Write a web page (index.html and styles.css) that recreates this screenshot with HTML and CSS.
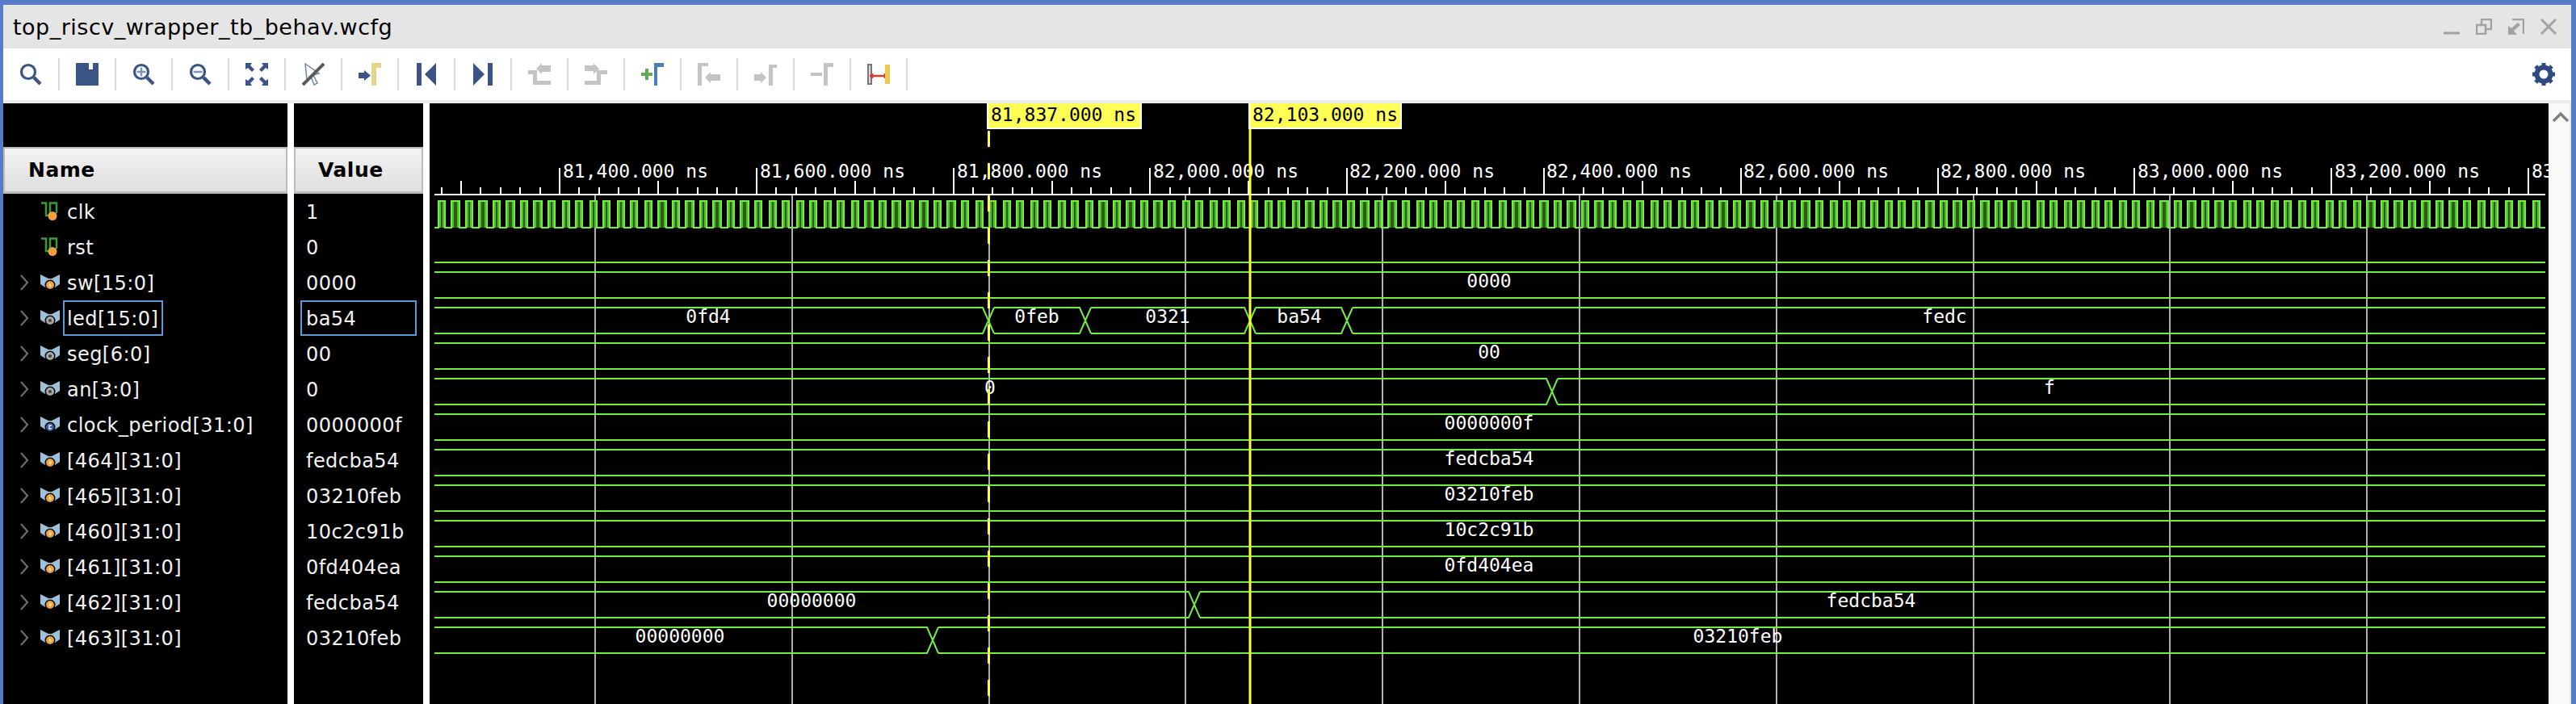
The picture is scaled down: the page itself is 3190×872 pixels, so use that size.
FILE: index.html
```html
<!doctype html>
<html>
    <head>
        <meta charset="utf-8">
        <title>top_riscv_wrapper_tb_behav.wcfg</title>
        <link rel="stylesheet" href="styles.css">
    </head>
    <body>
        <div class="window">
            <div class="titlebar">
                <span class="title">top_riscv_wrapper_tb_behav.wcfg</span>
                <div class="winbtns">
                    <svg viewBox="0 0 20 20"><path class="wb" d="M0 18H20"/></svg>
                    <svg viewBox="0 0 20 20"><path class="wb thin" d="M1 8H12V19H1ZM7 8V1H19V13H12"/></svg>
                    <svg viewBox="0 0 20 20"><path class="wb thin" d="M5 1H19V19"/><path class="wbf" d="M0 20V9L4 12L12 5L15 8L7 15L11 20Z"/></svg>
                    <svg viewBox="0 0 20 20"><path class="wb" d="M1 1L19 19M19 1L1 19"/></svg>
                </div>
            </div>

            <div class="toolbar">
                <div class="tool"><svg viewBox="0 0 28 28"><circle class="ln" cx="11" cy="11" r="8.5"/><path class="ln fat" d="M18 18L26 26"/></svg></div>
                <div class="tool"><svg viewBox="0 0 28 28"><path class="fl" d="M0 0H16V8H21V0H28V28H0Z"/></svg></div>
                <div class="tool"><svg viewBox="0 0 28 28"><circle class="ln" cx="11" cy="11" r="8.5"/><path class="ln fat" d="M18 18L26 26"/><path class="ln pale" d="M11 5.500V16.500M5.500 11H16.500"/></svg></div>
                <div class="tool"><svg viewBox="0 0 28 28"><circle class="ln" cx="11" cy="11" r="8.500"/><path class="ln fat" d="M18 18L26 26"/><path class="ln pale" d="M5.500 11H16.500"/></svg></div>
                <div class="tool"><svg viewBox="0 0 28 28"><path class="fl" d="M0 0H8L6 3L11 8L8 11L3 6L0 8ZM28 0H20L22 3L17 8L20 11L25 6L28 8ZM0 28H8L6 25L11 20L8 17L3 22L0 20ZM28 28H20L22 25L17 20L20 17L25 22L28 20Z"/></svg></div>
                <div class="tool"><svg viewBox="0 0 28 28"><path class="ln slim" d="M4 1L21 13L14 15L19 25L15 27L11 17L6 21Z"/><path class="ln gr" d="M1 27L27 1"/></svg></div>
                <div class="tool"><svg viewBox="0 0 28 28"><path class="fl" d="M0 12H7V9L15 15.500L7 22V19H0Z"/><path class="fy" d="M16 0H28V6H22V28H16Z"/></svg></div>
                <div class="tool"><svg viewBox="0 0 28 28"><path class="fl" d="M2 0H8V28H2ZM26 0V28L12 14Z"/></svg></div>
                <div class="tool"><svg viewBox="0 0 28 28"><path class="fl" d="M2 0L16 14L2 28ZM20 0H26V28H20Z"/></svg></div>
                <div class="tool"><svg viewBox="0 0 28 28"><path class="fg" d="M0 9H11V22H28V27H6V14H0ZM10 7L17 0V3H28V11H17V14Z"/></svg></div>
                <div class="tool"><svg viewBox="0 0 28 28"><path class="fg" d="M0 3H11V0L18 7L11 14V10H0ZM28 9V14H20V27H0V22H15V9Z"/></svg></div>
                <div class="tool"><svg viewBox="0 0 28 28"><path class="fgn" d="M5 7H9V12H14V16H9V21H5V16H0V12H5Z"/><path class="fb" d="M16 0H28V5H20V28H16Z"/></svg></div>
                <div class="tool"><svg viewBox="0 0 28 28"><path class="fg" d="M0 0H13V4H5V28H0ZM9 18L16 11V14H28V22H16V25Z"/></svg></div>
                <div class="tool"><svg viewBox="0 0 28 28"><path class="fg" d="M0 14H8V11L15 18L8 25V22H0ZM18 2H28V6H23V28H18Z"/></svg></div>
                <div class="tool"><svg viewBox="0 0 28 28"><path class="fg" d="M0 12H14V16H0ZM16 0H28V5H21V28H16Z"/></svg></div>
                <div class="tool"><svg viewBox="0 0 28 28"><path class="swap1" d="M1 2H5V26H1Z"/><path class="swap2" d="M3 16H25M6 13V19M22 13V19"/><path class="fy2" d="M22 2H28V26H22Z"/></svg></div>
                <div class="gear">
                    <svg viewBox="0 0 28 28"><circle class="gear-ring" cx="14" cy="14" r="8.500"/><path class="gear-teeth" d="M14 0V28M0 14H28M4 4L24 24M24 4L4 24"/></svg>
                </div>
            </div>

            <div class="main">
                <div class="names">
                    <div class="colhead namehead">Name</div>
                    <div class="row"><span class="nochev"></span><svg class="ico" viewBox="0 0 24 24"><path class="bit" d="M1 1.500H7V17H12V1.500H20V14"/><circle class="dot" cx="15" cy="17.500" r="5.500"/></svg><span class="nm">clk</span></div>
                    <div class="row"><span class="nochev"></span><svg class="ico" viewBox="0 0 24 24"><path class="bit" d="M1 1.500H7V17H12V1.500H20V14"/><circle class="dot" cx="15" cy="17.500" r="5.500"/></svg><span class="nm">rst</span></div>
                    <div class="row"><svg class="chev" viewBox="0 0 10 20"><path d="M1 1L9 10L1 19"/></svg><svg class="ico" viewBox="0 0 24 24"><path class="wing" d="M0 2L10 7H14L24 2V14L18 18H6L0 14Z"/><circle class="ring" cx="12" cy="15" r="6.500"/><circle class="dot" cx="12" cy="15" r="5"/><rect class="pip" x="10.500" y="13" width="3" height="4"/></svg><span class="nm">sw[15:0]</span></div>
                    <div class="row"><svg class="chev" viewBox="0 0 10 20"><path d="M1 1L9 10L1 19"/></svg><svg class="ico" viewBox="0 0 24 24"><path class="wing" d="M0 2L10 7H14L24 2V14L18 18H6L0 14Z"/><circle class="ring" cx="12" cy="15" r="6.500"/><circle class="dotg" cx="12" cy="15" r="5"/><circle class="hole" cx="12" cy="15" r="2"/></svg><span class="nm sel">led[15:0]</span></div>
                    <div class="row"><svg class="chev" viewBox="0 0 10 20"><path d="M1 1L9 10L1 19"/></svg><svg class="ico" viewBox="0 0 24 24"><path class="wing" d="M0 2L10 7H14L24 2V14L18 18H6L0 14Z"/><circle class="ring" cx="12" cy="15" r="6.500"/><circle class="dotg" cx="12" cy="15" r="5"/><circle class="hole" cx="12" cy="15" r="2"/></svg><span class="nm">seg[6:0]</span></div>
                    <div class="row"><svg class="chev" viewBox="0 0 10 20"><path d="M1 1L9 10L1 19"/></svg><svg class="ico" viewBox="0 0 24 24"><path class="wing" d="M0 2L10 7H14L24 2V14L18 18H6L0 14Z"/><circle class="ring" cx="12" cy="15" r="6.500"/><circle class="dotg" cx="12" cy="15" r="5"/><circle class="hole" cx="12" cy="15" r="2"/></svg><span class="nm">an[3:0]</span></div>
                    <div class="row"><svg class="chev" viewBox="0 0 10 20"><path d="M1 1L9 10L1 19"/></svg><svg class="ico" viewBox="0 0 24 24"><path class="wing" d="M0 2L10 7H14L24 2V14L18 18H6L0 14Z"/><circle class="ring" cx="12" cy="15" r="6.500"/><circle class="dotb" cx="12" cy="15" r="5"/><path class="cee" d="M14 13H11V17H14"/></svg><span class="nm">clock_period[31:0]</span></div>
                    <div class="row"><svg class="chev" viewBox="0 0 10 20"><path d="M1 1L9 10L1 19"/></svg><svg class="ico" viewBox="0 0 24 24"><path class="wing" d="M0 2L10 7H14L24 2V14L18 18H6L0 14Z"/><circle class="ring" cx="12" cy="15" r="6.500"/><circle class="dot" cx="12" cy="15" r="5"/><rect class="pip" x="10.500" y="13" width="3" height="4"/></svg><span class="nm">[464][31:0]</span></div>
                    <div class="row"><svg class="chev" viewBox="0 0 10 20"><path d="M1 1L9 10L1 19"/></svg><svg class="ico" viewBox="0 0 24 24"><path class="wing" d="M0 2L10 7H14L24 2V14L18 18H6L0 14Z"/><circle class="ring" cx="12" cy="15" r="6.500"/><circle class="dot" cx="12" cy="15" r="5"/><rect class="pip" x="10.500" y="13" width="3" height="4"/></svg><span class="nm">[465][31:0]</span></div>
                    <div class="row"><svg class="chev" viewBox="0 0 10 20"><path d="M1 1L9 10L1 19"/></svg><svg class="ico" viewBox="0 0 24 24"><path class="wing" d="M0 2L10 7H14L24 2V14L18 18H6L0 14Z"/><circle class="ring" cx="12" cy="15" r="6.500"/><circle class="dot" cx="12" cy="15" r="5"/><rect class="pip" x="10.500" y="13" width="3" height="4"/></svg><span class="nm">[460][31:0]</span></div>
                    <div class="row"><svg class="chev" viewBox="0 0 10 20"><path d="M1 1L9 10L1 19"/></svg><svg class="ico" viewBox="0 0 24 24"><path class="wing" d="M0 2L10 7H14L24 2V14L18 18H6L0 14Z"/><circle class="ring" cx="12" cy="15" r="6.500"/><circle class="dot" cx="12" cy="15" r="5"/><rect class="pip" x="10.500" y="13" width="3" height="4"/></svg><span class="nm">[461][31:0]</span></div>
                    <div class="row"><svg class="chev" viewBox="0 0 10 20"><path d="M1 1L9 10L1 19"/></svg><svg class="ico" viewBox="0 0 24 24"><path class="wing" d="M0 2L10 7H14L24 2V14L18 18H6L0 14Z"/><circle class="ring" cx="12" cy="15" r="6.500"/><circle class="dot" cx="12" cy="15" r="5"/><rect class="pip" x="10.500" y="13" width="3" height="4"/></svg><span class="nm">[462][31:0]</span></div>
                    <div class="row"><svg class="chev" viewBox="0 0 10 20"><path d="M1 1L9 10L1 19"/></svg><svg class="ico" viewBox="0 0 24 24"><path class="wing" d="M0 2L10 7H14L24 2V14L18 18H6L0 14Z"/><circle class="ring" cx="12" cy="15" r="6.500"/><circle class="dot" cx="12" cy="15" r="5"/><rect class="pip" x="10.500" y="13" width="3" height="4"/></svg><span class="nm">[463][31:0]</span></div>
                </div>

                <div class="values">
                    <div class="colhead valhead">Value</div>
                    <div class="row"><span class="val">1</span></div>
                    <div class="row"><span class="val">0</span></div>
                    <div class="row"><span class="val">0000</span></div>
                    <div class="row"><span class="val sel">ba54</span></div>
                    <div class="row"><span class="val">00</span></div>
                    <div class="row"><span class="val">0</span></div>
                    <div class="row"><span class="val">0000000f</span></div>
                    <div class="row"><span class="val">fedcba54</span></div>
                    <div class="row"><span class="val">03210feb</span></div>
                    <div class="row"><span class="val">10c2c91b</span></div>
                    <div class="row"><span class="val">0fd404ea</span></div>
                    <div class="row"><span class="val">fedcba54</span></div>
                    <div class="row"><span class="val">03210feb</span></div>
                </div>

                <svg class="wave" viewBox="532 128 2624 744">
                    <g id="grid"></g>
                    <g id="ruler"></g>
                    <g id="clk"></g>
                    <g id="buses"></g>

                    <text class="tick" x="697" y="220">81,400.000 ns</text>
                    <text class="tick" x="941" y="220">81,600.000 ns</text>
                    <text class="tick" x="1185" y="220">81,800.000 ns</text>
                    <text class="tick" x="1428" y="220">82,000.000 ns</text>
                    <text class="tick" x="1671" y="220">82,200.000 ns</text>
                    <text class="tick" x="1915" y="220">82,400.000 ns</text>
                    <text class="tick" x="2159" y="220">82,600.000 ns</text>
                    <text class="tick" x="2403" y="220">82,800.000 ns</text>
                    <text class="tick" x="2647" y="220">83,000.000 ns</text>
                    <text class="tick" x="2891" y="220">83,200.000 ns</text>
                    <text class="tick" x="3135" y="220">83,400.000 ns</text>

                    <text class="bus" x="1844" y="356">0000</text>
                    <text class="bus" x="877" y="400">0fd4</text>
                    <text class="bus" x="1284" y="400">0feb</text>
                    <text class="bus" x="1446" y="400">0321</text>
                    <text class="bus" x="1609" y="400">ba54</text>
                    <text class="bus" x="2408" y="400">fedc</text>
                    <text class="bus" x="1844" y="444">00</text>
                    <text class="bus" x="1226" y="488">0</text>
                    <text class="bus" x="2538" y="488">f</text>
                    <text class="bus" x="1844" y="532">0000000f</text>
                    <text class="bus" x="1844" y="576">fedcba54</text>
                    <text class="bus" x="1844" y="620">03210feb</text>
                    <text class="bus" x="1844" y="664">10c2c91b</text>
                    <text class="bus" x="1844" y="708">0fd404ea</text>
                    <text class="bus" x="1005" y="752">00000000</text>
                    <text class="bus" x="2317" y="752">fedcba54</text>
                    <text class="bus" x="842" y="796">00000000</text>
                    <text class="bus" x="2152" y="796">03210feb</text>

                    <path class="cursor dash" d="M1224.500 162V872"/>
                    <path class="cursor" d="M1548 128V872"/>
                    <rect class="flag" x="1223" y="127" width="190" height="32"/>
                    <text class="mark" x="1227" y="150">81,837.000 ns</text>
                    <rect class="flag" x="1547" y="127" width="188" height="32"/>
                    <text class="mark" x="1551" y="150">82,103.000 ns</text>
                </svg>

                <div class="scroll">
                    <svg class="up" viewBox="0 0 20 14"><path d="M1 12L10 3L19 12"/></svg>
                </div>
            </div>
        </div>
        <script src="wave.js"></script>
    </body>
</html>
```

FILE: styles.css
```css
*{margin:0;padding:0;box-sizing:border-box;}
body{background:#567bc7;}
.window{
    width:3190px;
    height:872px;
    border-top:6px solid #567bc7;
    border-left:4px solid #567bc7;
    border-right:6px solid #567bc7;
    background:#fff;
    font-family:"DejaVu Sans",sans-serif;
    overflow:hidden;
}

/* title */
.titlebar{
    height:54px;
    background:#e5e5e5;
    display:flex;
    align-items:center;
    justify-content:space-between;
    padding:0 18px 0 12px;
}
.title{font-size:27px;letter-spacing:0.5px;color:#000;}
.winbtns{display:flex;gap:20px;}
.winbtns svg{width:20px;height:20px;display:block;}
.wb{fill:none;stroke:#a2a2a2;stroke-width:3;}
.wb.thin{stroke-width:2.5;}
.wbf{fill:#a2a2a2;}

/* toolbar */
.toolbar{
    height:68px;
    border-bottom:4px solid #ebebeb;
    background:#fff;
    display:flex;
    align-items:center;
    position:relative;
}
.tool{
    width:70px;
    height:40px;
    padding-left:20px;
    border-right:2px solid #d8d8d8;
    display:flex;
    align-items:center;
}
.tool svg{width:28px;height:28px;display:block;}
.ln{fill:none;stroke:#3b5486;stroke-width:3.2;}
.ln.fat{stroke-width:4.500;}
.ln.pale{stroke:#8094b8;stroke-width:2.500;}
.ln.slim{stroke:#6f86ad;stroke-width:1.500;}
.ln.gr{stroke:#5a5a5a;stroke-width:4;}
.fl{fill:#3b5486;}
.fy{fill:#e5d48c;}
.fg{fill:#c4c4c4;}
.fgn{fill:#5bae52;}
.fb{fill:#4c80b4;}
.fy2{fill:#eec94e;}
.swap1{fill:#ddd;stroke:#777;stroke-width:2;}
.swap2{fill:none;stroke:#e0352b;stroke-width:2.500;}
.gear{margin-left:auto;margin-right:20px;}
.gear svg{width:28px;height:28px;display:block;}
.gear-ring{fill:none;stroke:#2f4a80;stroke-width:6;}
.gear-teeth{fill:none;stroke:#2f4a80;stroke-width:5;stroke-dasharray:5 18 5 0;}

/* panels */
.main{
    height:744px;
    display:flex;
    gap:8px;
    background:#fff;
}
.names{width:352px;height:100%;background:#000;padding-top:54px;}
.values{width:160px;height:100%;background:#000;padding-top:54px;}
.colhead{
    height:58px;
    background:linear-gradient(#f3f3f3,#dedede);
    border:2px solid #bcbcbc;
    border-bottom-width:3px;
    display:flex;
    align-items:center;
    font-size:25px;
    font-weight:bold;
    letter-spacing:0.5px;
    color:#000;
}
.namehead{padding-left:29px;}
.valhead{padding-left:28px;}
.row{
    height:44px;
    display:flex;
    align-items:center;
    color:#f2f2f2;
    font-size:24px;
    letter-spacing:0.45px;
}
.nochev{width:46px;}
.chev{width:10px;height:20px;margin-left:21px;margin-right:15px;fill:none;stroke:#6e6e6e;stroke-width:2.200;}
.ico{width:24px;height:24px;margin-right:4px;flex:none;}
.bit{fill:none;stroke:#3f9b3a;stroke-width:2.500;}
.wing{fill:#9dc1d8;}
.ring{fill:#000;}
.dot{fill:#f0a040;}
.dotg{fill:#a8a8a8;}
.dotb{fill:#3f5c9a;}
.pip{fill:#fbd8a8;}
.hole{fill:#444;}
.cee{fill:none;stroke:#dfe6f2;stroke-width:1.600;}
.nm{
    height:44px;
    line-height:43px;
    padding:0 4px 0 3px;
    border:2px solid transparent;
}
.nm.sel,.val.sel{border-color:#5a9bd5;}
.val{
    width:144px;
    height:44px;
    line-height:43px;
    margin-left:8px;
    padding-left:5px;
    border:2px solid transparent;
}

/* wave */
.wave{width:2624px;height:744px;background:#000;display:block;flex:none;}
.wave text{font-family:"DejaVu Sans Mono",monospace;font-size:23px;fill:#fff;}
.wave .bus{text-anchor:middle;}
.wave .mark{fill:#000;}
.flag{fill:#ffff55;stroke:#fff;stroke-width:2;}
.cursor{stroke:#ffff40;stroke-width:3;fill:none;}
.cursor.dash{stroke-dasharray:20 20;}
.grid-line{stroke:#b0b0b0;stroke-width:2;}
.rule{stroke:#fff;stroke-width:2;shape-rendering:crispEdges;}
.sig{fill:none;stroke:#70ee44;stroke-width:2;}
.sig-edge{shape-rendering:crispEdges;}
.pulse-mid{fill:#54b538;shape-rendering:crispEdges;}
.pulse-dark{fill:#28600f;shape-rendering:crispEdges;}

.scroll{
    width:28px;
    margin-left:-8px;
    height:100%;
    background:#f9f9f9;
    border-left:1px solid #fff;
    border-right:2px solid #e6e6e6;
    padding:10px 0 0 4px;
}
.up{width:20px;height:14px;display:block;fill:none;stroke:#808080;stroke-width:3.500;}
```

FILE: wave.js
```js
var NS="http://www.w3.org/2000/svg";
var START=538,END=3152;

function add(parent,name,attrs){
    var el=document.createElementNS(NS,name);
    for(var k in attrs) el.setAttribute(k,attrs[k]);
    document.getElementById(parent).appendChild(el);
}

//grid and ruler, 20ns = 24.38px
for(var i=-6;i<120;i++){
    var x=Math.round(693+i*24.38);
    if(x<START||x>3151) continue;
    var h=i%10==0?32:(i%5==0?16:8);
    add("ruler","line",{"class":"rule",x1:x,x2:x,y1:240-h,y2:241});
}
add("ruler","line",{"class":"rule",x1:START,x2:END,y1:241,y2:241});
for(var g=0;g<10;g++){
    var gx=Math.round(737+g*243.8);
    add("grid","line",{"class":"grid-line",x1:gx,x2:gx,y1:240,y2:872});
}

//clk, edges land on a 2px grid
var d="M"+START+" 282";
for(var n=0;n<154;n++){
    var e=541.5+n*17.065;
    var l=2*Math.round(e/2),r=2*Math.round((e+10.5)/2);
    if(r>3150) break;
    add("clk","rect",{"class":"pulse-mid",x:l+2,y:250,width:r-l-4,height:32});
    add("clk","rect",{"class":"pulse-dark",x:l+4,y:250,width:r-l-8,height:32});
    d+="H"+(l+1)+"V249H"+(r-1)+"V282";
}
d+="H"+END;
add("clk","path",{"class":"sig sig-edge",d:d});

//rst low
add("buses","path",{"class":"sig",d:"M"+START+" 325H"+END});

//[row index, transition positions]
var rows=[[0,[]],[1,[1224,1344,1548,1668]],[2,[]],[3,[1922]],[4,[]],[5,[]],[6,[]],[7,[]],[8,[]],[9,[1479]],[10,[1155]]];
for(var b=0;b<rows.length;b++){
    var yHi=337+rows[b][0]*44,yLo=369+rows[b][0]*44,ts=rows[b][1],p=START;
    var s="";
    for(var t=0;t<ts.length;t++){
        s+="M"+p+" "+yHi+"H"+(ts[t]-7)+"L"+(ts[t]+7)+" "+yLo;
        s+="M"+p+" "+yLo+"H"+(ts[t]-7)+"L"+(ts[t]+7)+" "+yHi;
        p=ts[t]+7;
    }
    s+="M"+p+" "+yHi+"H"+END+"M"+p+" "+yLo+"H"+END;
    add("buses","path",{"class":"sig",d:s});
}
```
